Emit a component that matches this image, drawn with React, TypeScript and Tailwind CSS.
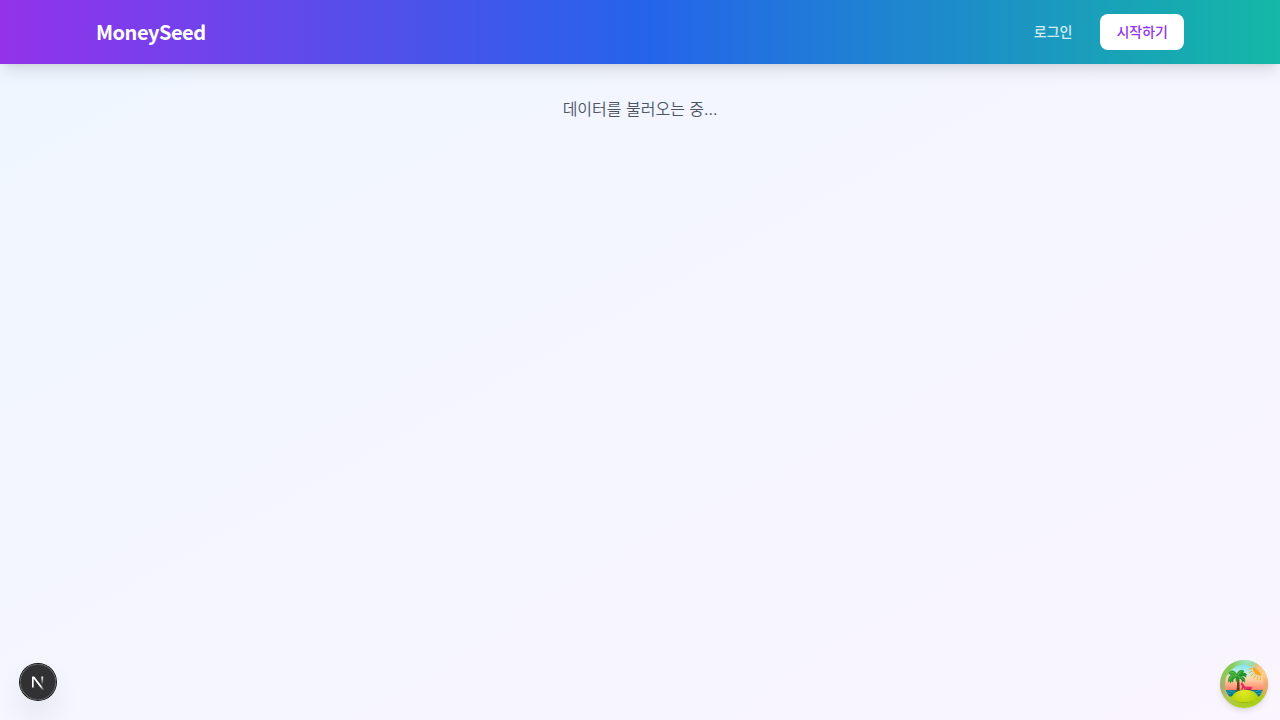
function NextLogo() {
  return (
    <svg className="size-9" viewBox="0 0 36 36" fill="none" aria-hidden="true">
      <g transform="translate(10.4 11)">
        <path
          d="M13.3 15.2 L2.34 1 V12.6"
          stroke="url(#next-diagonal)"
          strokeWidth="1.86"
          mask="url(#next-corner)"
        />
        <path d="M11.825 1.5 V13.1" stroke="url(#next-stem)" strokeWidth="1.86" />
      </g>
      <defs>
        <linearGradient id="next-diagonal" x1="9.956" y1="11.123" x2="15.478" y2="17.967" gradientUnits="userSpaceOnUse">
          <stop stopColor="white" />
          <stop offset="0.604" stopColor="white" stopOpacity="0" />
          <stop offset="1" stopColor="white" stopOpacity="0" />
        </linearGradient>
        <linearGradient id="next-stem" x1="11.822" y1="1.4" x2="11.791" y2="9.625" gradientUnits="userSpaceOnUse">
          <stop stopColor="white" />
          <stop offset="1" stopColor="white" stopOpacity="0" />
        </linearGradient>
        <mask id="next-corner">
          <rect width="100%" height="100%" fill="white" />
          <rect width="5" height="1.5" fill="black" />
        </mask>
      </defs>
    </svg>
  );
}

function IslandLogo() {
  return (
    <svg className="size-12" viewBox="0 0 48 48" aria-hidden="true">
      <defs>
        <linearGradient id="island-ring" x1="8" y1="4" x2="34" y2="46" gradientUnits="userSpaceOnUse">
          <stop offset="0" stopColor="#7fca4e" />
          <stop offset="0.45" stopColor="#b4c763" />
          <stop offset="1" stopColor="#a9cf12" />
        </linearGradient>
        <radialGradient id="ring-aqua" cx="27" cy="0" r="17" gradientUnits="userSpaceOnUse">
          <stop stopColor="#a4e8d0" />
          <stop offset="1" stopColor="#8be8da" stopOpacity="0" />
        </radialGradient>
        <radialGradient id="ring-gold" cx="46" cy="13" r="17" gradientUnits="userSpaceOnUse">
          <stop stopColor="#ffd18a" />
          <stop offset="0.55" stopColor="#fbc284" />
          <stop offset="1" stopColor="#fbc284" stopOpacity="0" />
        </radialGradient>
        <radialGradient id="ring-coral" cx="47" cy="27" r="12" gradientUnits="userSpaceOnUse">
          <stop stopColor="#f2a274" />
          <stop offset="1" stopColor="#ee9b6c" stopOpacity="0" />
        </radialGradient>
        <radialGradient id="ring-moss" cx="1" cy="27" r="12" gradientUnits="userSpaceOnUse">
          <stop stopColor="#aaa778" />
          <stop offset="1" stopColor="#aaa778" stopOpacity="0" />
        </radialGradient>
        <linearGradient id="island-sky" x1="24" y1="4" x2="24" y2="31" gradientUnits="userSpaceOnUse">
          <stop offset="0" stopColor="#78e3ee" />
          <stop offset="0.3" stopColor="#bceee2" />
          <stop offset="0.55" stopColor="#ffd5a6" />
          <stop offset="1" stopColor="#ff7c66" />
        </linearGradient>
        <radialGradient id="island-sand" cx="24" cy="32" r="15" gradientUnits="userSpaceOnUse">
          <stop stopColor="#e4ea24" />
          <stop offset="1" stopColor="#b1cf0b" />
        </radialGradient>
        <linearGradient id="palm-leaf" x1="10" y1="10" x2="26" y2="24" gradientUnits="userSpaceOnUse">
          <stop stopColor="#42b832" />
          <stop offset="1" stopColor="#087c2a" />
        </linearGradient>
        <clipPath id="island-window">
          <circle cx="24.3" cy="24" r="19.3" />
        </clipPath>
      </defs>
      <circle cx="24" cy="24" r="24" fill="url(#island-ring)" />
      <circle cx="24" cy="24" r="24" fill="url(#ring-aqua)" />
      <circle cx="24" cy="24" r="24" fill="url(#ring-gold)" />
      <circle cx="24" cy="24" r="24" fill="url(#ring-coral)" />
      <circle cx="24" cy="24" r="24" fill="url(#ring-moss)" />
      <g clipPath="url(#island-window)">
        <rect width="48" height="36" fill="url(#island-sky)" />
        <path d="M3 36 H45 V46 H3 Z" fill="#a7cc14" />
        <path
          d="M32 6 L29.2 5.6 M31.8 8.6 L29 9 M32.2 11.3 L29.5 12.3 M33.5 13.7 L31.3 15.6 M35.4 15.5 L33.9 18 M37.7 16.7 L37.1 19.5 M40.3 17 L40.7 19.7"
          stroke="#f9a92a"
          strokeWidth="1"
          strokeLinecap="round"
        />
        <circle cx="40" cy="8.6" r="7.2" fill="#ffa41c" />
        <circle cx="41.5" cy="7" r="5.5" fill="#ffb829" opacity="0.7" />
        <path d="M3 30 H45 V35.4 Q40 37 34 36 H14 Q9 37 3 35.4 Z" fill="#07758f" />
        <path
          d="M3 31.4 q2 1.3 4 0 t4 0 t4 0 M33 31.4 q2 1.3 4 0 t4 0 t4 0 M3 33.8 q2 1.3 4 0 t4 0 M34 33.8 q2 1.3 4 0 t4 0 t4 0"
          fill="none"
          stroke="#33b6bf"
          strokeWidth="0.8"
        />
        <g fill="none" strokeLinecap="round" strokeLinejoin="round">
          <path d="M21.8 24 L24.6 27.6 L31.2 27.9" stroke="#ed2868" strokeWidth="2.2" />
          <path d="M22.8 26.8 L21.8 30 M24.5 29.2 L30.8 29.5 L31.6 30.8" stroke="#a3174d" strokeWidth="1" />
        </g>
        <path
          d="M11 38.6 C12.6 33 18.6 29.8 25.2 29.8 C32 29.8 37.6 33.2 38.8 38.4 C37.8 41.5 32 43 25.3 43 C18.5 43 12.2 41.8 11 38.6 Z"
          fill="url(#island-sand)"
        />
        <path d="M16.2 17 C17.6 21 17.2 26 16.2 31.6 L19.8 30.6 C19.2 26 19.8 21 18.8 17 Z" fill="#7b4323" />
        <path d="M17.3 21 L19.4 20.5 M17.3 23.5 L19.4 23 M17 26 L19.4 25.5 M16.8 28.6 L19.6 28" stroke="#3d2918" strokeWidth="0.6" />
        <g transform="translate(-1.6 -0.8) scale(1.05)">
          <path
            d="M17.5 15 C16 10.3 11.8 9.8 9.2 13 L11 12.6 L9.8 14.4 L12 13.5 L11.5 15 C13 14 14 14.2 15 15 C11 14.6 9 17.2 9.6 22 L11.2 20 L11.2 22.8 L12.6 20.8 L13.8 22 C13.8 19.5 14.6 18 16.8 17.4 C16.4 19.8 17 21.6 18.4 22.6 L19.8 18.4 C22 18.6 23 20 22.6 22.2 L24 20.2 L24.8 22 C26 18.6 24.2 16.6 21 16.2 C23.4 15.6 25 16 26.4 17.2 L25.8 15.2 L27 15 C26 13.2 24.4 12.9 23 13.2 L24.4 11.2 C21.2 9.6 18.2 11.4 17.5 15 Z"
            fill="url(#palm-leaf)"
            stroke="#13802c"
            strokeWidth="0.4"
          />
          <path d="M11 12.2 Q15 11.8 17.6 16 Q12 15 10.6 19.5 M18.5 15.7 Q19 12.6 22 11.6 M18.6 16.6 Q23 16.6 24 20" fill="none" stroke="#8fd84c" strokeWidth="0.5" />
        </g>
        <path d="M13 41 H14.4 L15.2 42 H18 L19 42.8 H29.5 L30.4 42 H34 L35 41" fill="none" stroke="#526b0a" strokeWidth="0.6" strokeDasharray="2 0.8" />
      </g>
    </svg>
  );
}

export default function App() {
  return (
    <div className="min-h-screen bg-linear-to-br from-[#eff6ff] to-[#faf5ff] font-['Liberation_Sans','Noto_Sans_CJK_KR',sans-serif]">
      <header className="bg-linear-to-r/srgb from-[#9333ea] via-[#2563eb] to-[#14b8a6] shadow-lg">
        <nav className="mx-auto flex h-16 max-w-6xl items-center justify-between px-8">
          <a href="#" className="font-['Noto_Sans_CJK_KR',sans-serif] text-xl font-bold tracking-tight text-white">
            MoneySeed
          </a>
          <div className="flex items-center gap-3">
            <a href="#login" className="px-4 py-2 text-sm font-medium text-white/80">
              로그인
            </a>
            <button type="button" className="rounded-lg bg-white px-4 py-2 text-sm font-medium text-[#9333ea]">
              시작하기
            </button>
          </div>
        </nav>
      </header>
      <main className="mx-auto max-w-6xl px-8 py-8">
        <p className="text-center text-base leading-7 font-[350] text-[#4b5563]">데이터를 불러오는 중...</p>
      </main>
      <button
        type="button"
        aria-label="Open Next.js Dev Tools"
        className="fixed bottom-5 left-5 size-9 rounded-full bg-black/80 shadow-[0_0_0_1px_#171717,inset_0_0_0_1px_rgba(255,255,255,0.14),0_16px_32px_-8px_rgba(0,0,0,0.24)]"
      >
        <NextLogo />
      </button>
      <button
        type="button"
        aria-label="Open Tanstack query devtools"
        className="fixed right-3 bottom-3 size-12 rounded-full shadow-md"
      >
        <IslandLogo />
      </button>
    </div>
  );
}
